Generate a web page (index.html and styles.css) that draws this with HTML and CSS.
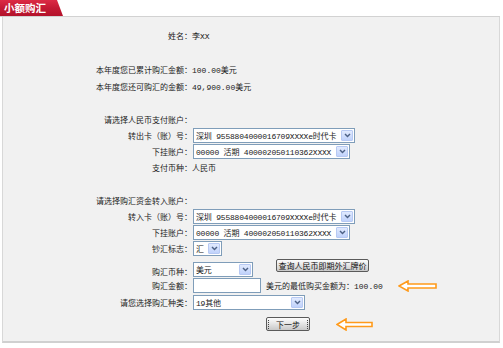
FILE: index.html
```html
<!DOCTYPE html>
<html lang="zh-CN">
<head>
  <meta charset="UTF-8" />
  <title>小额购汇</title>
  <link rel="stylesheet" href="styles.css">
</head>
<body>
  <div class="tabbar">
    <div class="tab">小额购汇</div>
  </div>

  <div class="panel">
    <div class="row"><span class="lbl">姓名：</span><span class="val">李XX</span></div>
    <div class="row"></div>
    <div class="row"><span class="lbl">本年度您已累计购汇金额：</span><span class="val">100.00美元</span></div>
    <div class="row"><span class="lbl">本年度您还可购汇的金额：</span><span class="val">49,900.00美元</span></div>
    <div class="row"></div>
    <div class="row h15"><span class="lbl">请选择人民币支付账户：</span></div>
    <div class="row h16">
      <span class="lbl">转出卡（账）号：</span>
      <span class="select w162"><span class="opt">深圳 9558804000016709XXXXe时代卡</span><span class="arrow"><svg width="7" height="5" viewBox="0 0 7 5"><polyline points="1,1 3.5,3.6 6,1" /></svg></span></span>
    </div>
    <div class="row h16">
      <span class="lbl">下挂账户：</span>
      <span class="select w157"><span class="opt">00000 活期 400002050110362XXXX</span><span class="arrow"><svg width="7" height="5" viewBox="0 0 7 5"><polyline points="1,1 3.5,3.6 6,1" /></svg></span></span>
    </div>
    <div class="row"><span class="lbl">支付币种：</span><span class="val">人民币</span></div>
    <div class="row h16"></div>
    <div class="row h16"><span class="lbl">请选择购汇资金转入账户：</span></div>
    <div class="row h16">
      <span class="lbl">转入卡（账）号：</span>
      <span class="select w162"><span class="opt">深圳 9558804000016709XXXXe时代卡</span><span class="arrow"><svg width="7" height="5" viewBox="0 0 7 5"><polyline points="1,1 3.5,3.6 6,1" /></svg></span></span>
    </div>
    <div class="row h16">
      <span class="lbl">下挂账户：</span>
      <span class="select w157"><span class="opt">00000 活期 400002050110362XXXX</span><span class="arrow"><svg width="7" height="5" viewBox="0 0 7 5"><polyline points="1,1 3.5,3.6 6,1" /></svg></span></span>
    </div>
    <div class="row">
      <span class="lbl">钞汇标志：</span>
      <span class="select w29"><span class="opt">汇</span><span class="arrow"><svg width="7" height="5" viewBox="0 0 7 5"><polyline points="1,1 3.5,3.6 6,1" /></svg></span></span>
    </div>
    <div class="row h20 top">
      <span class="lbl lbl-mid">购汇币种：</span>
      <span class="select w60 sel-low"><span class="opt">美元</span><span class="arrow"><svg width="7" height="5" viewBox="0 0 7 5"><polyline points="1,1 3.5,3.6 6,1" /></svg></span></span>
      <span class="btn btn-query"><span>查询人民币即期外汇牌价</span></span>
    </div>
    <div class="row">
      <span class="lbl">购汇金额：</span>
      <span class="input"></span>
      <span class="hint">美元的最低购买金额为：100.00</span>
      <svg class="pointer first" width="40" height="12" viewBox="0 0 40 12"><polygon points="1,6 10,1 10,4 38,4 38,8 10,8 10,11" /></svg>
    </div>
    <div class="row h16">
      <span class="lbl">请您选择购汇种类：</span>
      <span class="select w112"><span class="opt">19其他</span><span class="arrow"><svg width="7" height="5" viewBox="0 0 7 5"><polyline points="1,1 3.5,3.6 6,1" /></svg></span></span>
    </div>
    <div class="row h28">
      <span class="btn btn-next"><span>下一步</span></span>
      <svg class="pointer second" width="38" height="13" viewBox="0 0 38 13"><polygon points="1,6.5 10,1 10,4.5 36,4.5 36,8.5 10,8.5 10,12" /></svg>
    </div>
  </div>
</body>
</html>
```

FILE: styles.css
```css
* {
  margin: 0;
  padding: 0;
  box-sizing: border-box;
}

body {
  background: #fff;
  font-family: "Liberation Mono", "Noto Sans CJK SC", monospace;
  font-size: 8px;
  color: #222;
  width: 503px;
  height: 348px;
  overflow: hidden;
}

.tabbar {
  height: 17px;
  width: 500px;
  border-bottom: 1px solid #d2d2d2;
}

.tab {
  width: 63px;
  height: 16px;
  line-height: 16px;
  padding-left: 4px;
  color: #fff;
  font-family: "Noto Sans CJK SC", sans-serif;
  font-size: 10.5px;
  font-weight: bold;
  background: linear-gradient(#dc2b45, #c41a34 50%, #b3122b);
  clip-path: polygon(0 0, 57px 0, 63px 100%, 0 100%);
}

.panel {
  margin-left: 2px;
  width: 498px;
  height: 326px;
  padding-top: 10px;
  background: #f1f1f1;
  border-left: 1px solid #d8d8d8;
  border-right: 1px solid #d8d8d8;
  border-bottom: 2px solid #d0d0d0;
}

.row {
  display: flex;
  align-items: center;
  height: 17px;
  white-space: nowrap;
}

.row.h15 { height: 15px; }
.row.h16 { height: 16px; }
.row.h20 { height: 20px; }
.row.h28 { height: 28px; }
.row.top { align-items: flex-start; }

.lbl {
  width: 189px;
  text-align: right;
  flex-shrink: 0;
}

.lbl-mid {
  margin-top: 9px;
}

.select {
  display: inline-flex;
  align-items: center;
  height: 15px;
  margin-left: 1px;
  padding-left: 2px;
  background: #fff;
  border: 1px solid #7f9db9;
  flex-shrink: 0;
}

.select .opt {
  flex: 1;
  overflow: hidden;
  letter-spacing: -0.2px;
}

.select .arrow {
  display: flex;
  align-items: center;
  justify-content: center;
  flex-shrink: 0;
  width: 12px;
  height: 11px;
  margin-right: 1px;
  background: linear-gradient(#e1eafe, #c0d2fb);
  border: 1px solid #b7c9f3;
  border-radius: 1px;
}

.select .arrow polyline {
  fill: none;
  stroke: #4d6185;
  stroke-width: 1.4;
}

.w29 { width: 29px; }
.w60 { width: 60px; }
.w112 { width: 112px; }
.w157 { width: 157px; }
.w162 { width: 162px; }

.sel-low {
  margin-top: 5px;
}

.input {
  width: 68px;
  height: 15px;
  margin-left: 1px;
  background: #fff;
  border: 1px solid #7f9db9;
}

.hint {
  margin-left: 5px;
}

.btn {
  display: inline-flex;
  align-items: center;
  justify-content: center;
  height: 13px;
  border: 1px solid #5a5a5a;
  border-radius: 2px;
  background: linear-gradient(#fdfdfd, #e6e6e6 45%, #c8c8c8);
  font-family: "Noto Sans CJK SC", sans-serif;
  color: #111;
  overflow: hidden;
}

.btn span {
  padding: 0 2px;
  line-height: 9px;
  border-left: 1px dotted #444;
  border-right: 1px dotted #444;
}

.btn-query {
  width: 93px;
  margin-left: 23px;
  margin-top: 2px;
}

.btn-next {
  width: 44px;
  height: 14px;
  margin-left: 263px;
}

.btn-next span {
  padding: 0 7px;
}

.pointer polygon {
  fill: #fff;
  stroke: #ff9a1a;
  stroke-width: 1.6;
  stroke-linejoin: miter;
}

.pointer.first {
  margin-left: 15px;
}

.pointer.second {
  margin-left: 26px;
}
```
